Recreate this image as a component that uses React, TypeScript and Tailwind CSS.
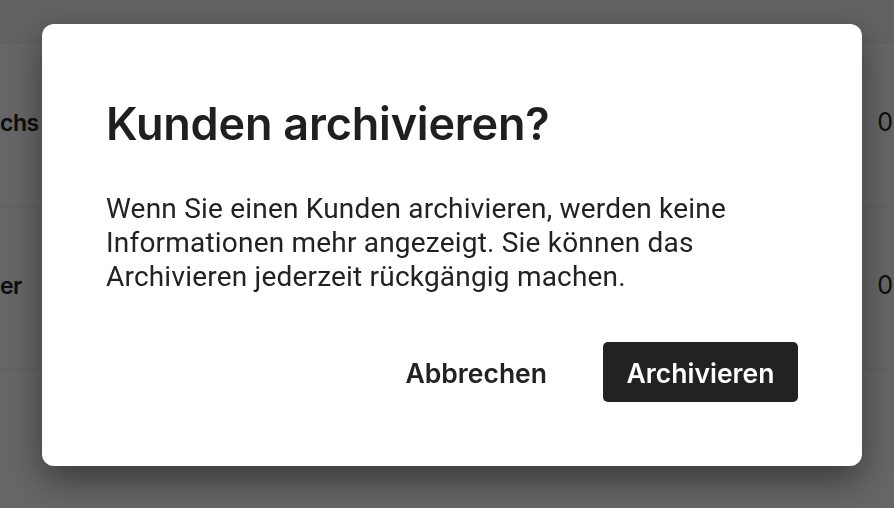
import React from 'react';

const rows = [
  { name: 'chs', value: '0' },
  { name: 'er', value: '0' },
];

const ArchiveDialog: React.FC = () => {
  return (
    <div className="fixed inset-0 bg-black/60">
      <div className="pl-[42px] pt-[24px]">
        <div
          role="dialog"
          className="w-[820px] h-[442px] bg-white rounded-[12px] shadow-[0_14px_36px_rgba(0,0,0,0.45)] px-[64px] pt-[72px] flex flex-col"
        >
          <h2
            className="text-[45px] leading-[56px] font-semibold text-[#1f1f1f] tracking-[-0.2px]"
            style={{ fontFamily: 'Inter, "Noto Sans", sans-serif' }}
          >
            Kunden archivieren?
          </h2>
          <p
            className="mt-[40px] text-[28px] leading-[34px] text-[#222222] w-[660px] tracking-[0.2px]"
            style={{ fontFamily: 'Roboto, "Noto Sans", sans-serif' }}
          >
            Wenn Sie einen Kunden archivieren, werden keine Informationen mehr angezeigt. Sie können das Archivieren jederzeit rückgängig machen.
          </p>
          <div
            className="mt-auto mb-[64px] flex items-center justify-end gap-[32px]"
            style={{ fontFamily: 'Inter, "Noto Sans", sans-serif' }}
          >
            <button className="h-[60px] pt-[3px] px-[24px] text-[26.5px] font-semibold text-[#222222]">
              Abbrechen
            </button>
            <button className="h-[60px] pt-[3px] w-[195px] rounded-[5px] bg-[#222222] text-[26.5px] font-semibold text-white">
              Archivieren
            </button>
          </div>
        </div>
      </div>
    </div>
  );
};

export default function App() {
  return (
    <div className="w-[894px] h-[508px] overflow-hidden bg-white relative">
      <div style={{ fontFamily: 'Inter, "Noto Sans", sans-serif' }}>
        <div className="h-[44px] border-b border-[#eeeeee] bg-[#f4f4f4]" />
        {rows.map((r, i) => (
          <div key={i} className="h-[163px] border-b border-[#eeeeee] flex items-center justify-between pb-[4px]">
            <span className="text-[23px] font-semibold text-[#222222] tracking-[-0.5px]">{r.name}</span>
            <span className="text-[25px] text-[#222222] mr-[1px]">{r.value}</span>
          </div>
        ))}
      </div>
      <ArchiveDialog />
    </div>
  );
}
